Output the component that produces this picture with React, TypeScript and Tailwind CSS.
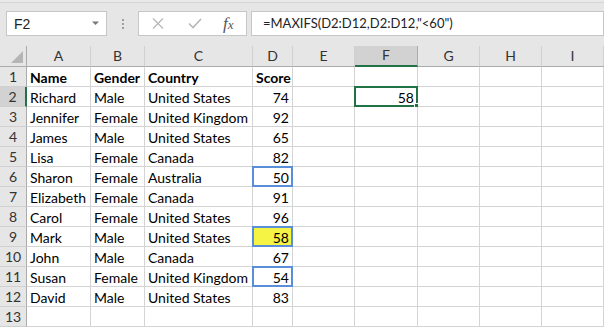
import React from "react";

const cols = ["A", "B", "C", "D", "E", "F", "G", "H", "I"];
const data: [string, string, string, string][] = [
  ["Name", "Gender", "Country", "Score"],
  ["Richard", "Male", "United States", "74"],
  ["Jennifer", "Female", "United Kingdom", "92"],
  ["James", "Male", "United States", "65"],
  ["Lisa", "Female", "Canada", "82"],
  ["Sharon", "Female", "Australia", "50"],
  ["Elizabeth", "Female", "Canada", "91"],
  ["Carol", "Female", "United States", "96"],
  ["Mark", "Male", "United States", "58"],
  ["John", "Male", "Canada", "67"],
  ["Susan", "Female", "United Kingdom", "54"],
  ["David", "Male", "United States", "83"],
  ["", "", "", ""],
];

const font = { fontFamily: "Lato, 'Noto Sans', sans-serif" };

function Cell({ children, right, bold, extra }: { children?: React.ReactNode; right?: boolean; bold?: boolean; extra?: string }) {
  return (
    <div
      className={`relative h-[20px] border-r border-b border-[#d4d4d4] bg-white px-[3px] pt-[1px] text-[14px] leading-[20px] text-black whitespace-nowrap overflow-visible ${right ? "text-right" : "text-left"} ${bold ? "font-bold" : ""} ${extra ?? ""}`}
    >
      {children}
    </div>
  );
}

export default function App() {
  return (
    <div className="w-[604px] h-[327px] overflow-hidden bg-white select-none" style={font}>
      {/* Toolbar */}
      <div className="h-[46px] bg-[#e6e6e6] flex flex-col">
        <div className="h-[3px] bg-[#e9e9e9] border-b border-[#d6d6d6]" />
        <div className="flex items-start pt-[8px] pl-[6px]">
          <div className="w-[101px] h-[25px] bg-white border border-[#c6c6c6] flex items-center justify-between pl-[7px] pr-[6px]">
            <span className="text-[#222] leading-none" style={{ fontFamily: "'Liberation Sans', sans-serif", fontSize: 14 }}>F2</span>
            <svg width="8" height="5" viewBox="0 0 8 5"><path d="M0 0.5 L7 0.5 L3.5 4 Z" fill="#777" /></svg>
          </div>
          <div className="w-[31px] h-[25px] flex flex-col items-center justify-center gap-[2px]">
            <div className="w-[2px] h-[2px] bg-[#a0a0a0]" />
            <div className="w-[2px] h-[2px] bg-[#a0a0a0]" />
            <div className="w-[2px] h-[2px] bg-[#a0a0a0]" />
          </div>
          <div className="w-[109px] h-[25px] bg-white border border-[#c6c6c6] flex items-center">
            <svg className="ml-[13px]" width="12" height="11" viewBox="0 0 12 11">
              <path d="M1 0.5 L11 10.5 M11 0.5 L1 10.5" stroke="#b8b8b8" strokeWidth="1.3" />
            </svg>
            <svg className="ml-[24px]" width="14" height="11" viewBox="0 0 14 11">
              <path d="M1 5.5 L5 9.5 L13 1" stroke="#b8b8b8" strokeWidth="1.6" fill="none" />
            </svg>
            <span className="ml-[21px] text-[17px] italic text-[#555] leading-none" style={{ fontFamily: "'Liberation Serif', serif" }}>
              f<span className="text-[13px]">x</span>
            </span>
          </div>
          <div className="ml-[4px] flex-1 h-[25px] bg-white border border-[#c6c6c6] flex items-center pl-[11px]">
            <span className="text-[13px] text-[#222] leading-none whitespace-nowrap">=MAXIFS(D2:D12,D2:D12,"&lt;60")</span>
          </div>
        </div>
      </div>

      {/* Grid */}
      <div className="grid grid-cols-[27px_64px_54px_108px_40px_62px_63px_62px_62px_62px]">
        {/* header row */}
        <div className="relative h-[21px] bg-[#e6e6e6] border-r border-b border-[#ababab]">
          <svg className="absolute left-[11px] top-[5px]" width="12" height="12" viewBox="0 0 12 12">
            <path d="M12 0 L12 12 L0 12 Z" fill="#b5b5b5" />
          </svg>
        </div>
        {cols.map((c) => (
          <div
            key={c}
            className={`h-[21px] flex items-end justify-center pb-[3px] text-[14px] leading-none text-[#333] border-r ${
              c === "F" ? "bg-[#d2d2d2] border-b-2 border-b-[#217346] border-r-[#ababab]" : "bg-[#e6e6e6] border-b border-b-[#ababab] border-r-[#d0d0d0]"
            }`}
          >
            {c}
          </div>
        ))}
        {data.map((row, i) => {
          const r = i + 1;
          return (
            <React.Fragment key={r}>
              <div
                className={`h-[20px] flex items-center justify-center pt-[1px] text-[14px] leading-none text-[#333] border-b border-[#d0d0d0] ${
                  r === 2 ? "bg-[#d2d2d2] border-r-2 border-r-[#217346]" : "bg-[#e6e6e6] border-r border-r-[#ababab]"
                }`}
              >
                {r}
              </div>
              <Cell bold={r === 1}>{row[0]}</Cell>
              <Cell bold={r === 1}>{row[1]}</Cell>
              <Cell bold={r === 1}>{row[2]}</Cell>
              <Cell bold={r === 1} right={r !== 1} extra={r === 9 ? "!bg-[#f5f343]" : ""}>
                {row[3]}
                {(r === 6 || r === 9 || r === 11) && (
                  <div className="absolute left-[-1px] top-[-1px] w-[41px] h-[21px] border-2 border-[#5b8ed8] pointer-events-none" />
                )}
              </Cell>
              <Cell />
              <Cell right>
                {r === 2 ? "58" : ""}
                {r === 2 && (
                  <>
                    <div className="absolute left-[-1px] top-[-1px] w-[64px] h-[21px] border-2 border-[#217346]" />
                    <div className="absolute left-[59px] top-[16px] w-[6px] h-[6px] bg-[#217346] border border-white" />
                  </>
                )}
              </Cell>
              <Cell />
              <Cell />
              <Cell />
            </React.Fragment>
          );
        })}
      </div>
    </div>
  );
}
